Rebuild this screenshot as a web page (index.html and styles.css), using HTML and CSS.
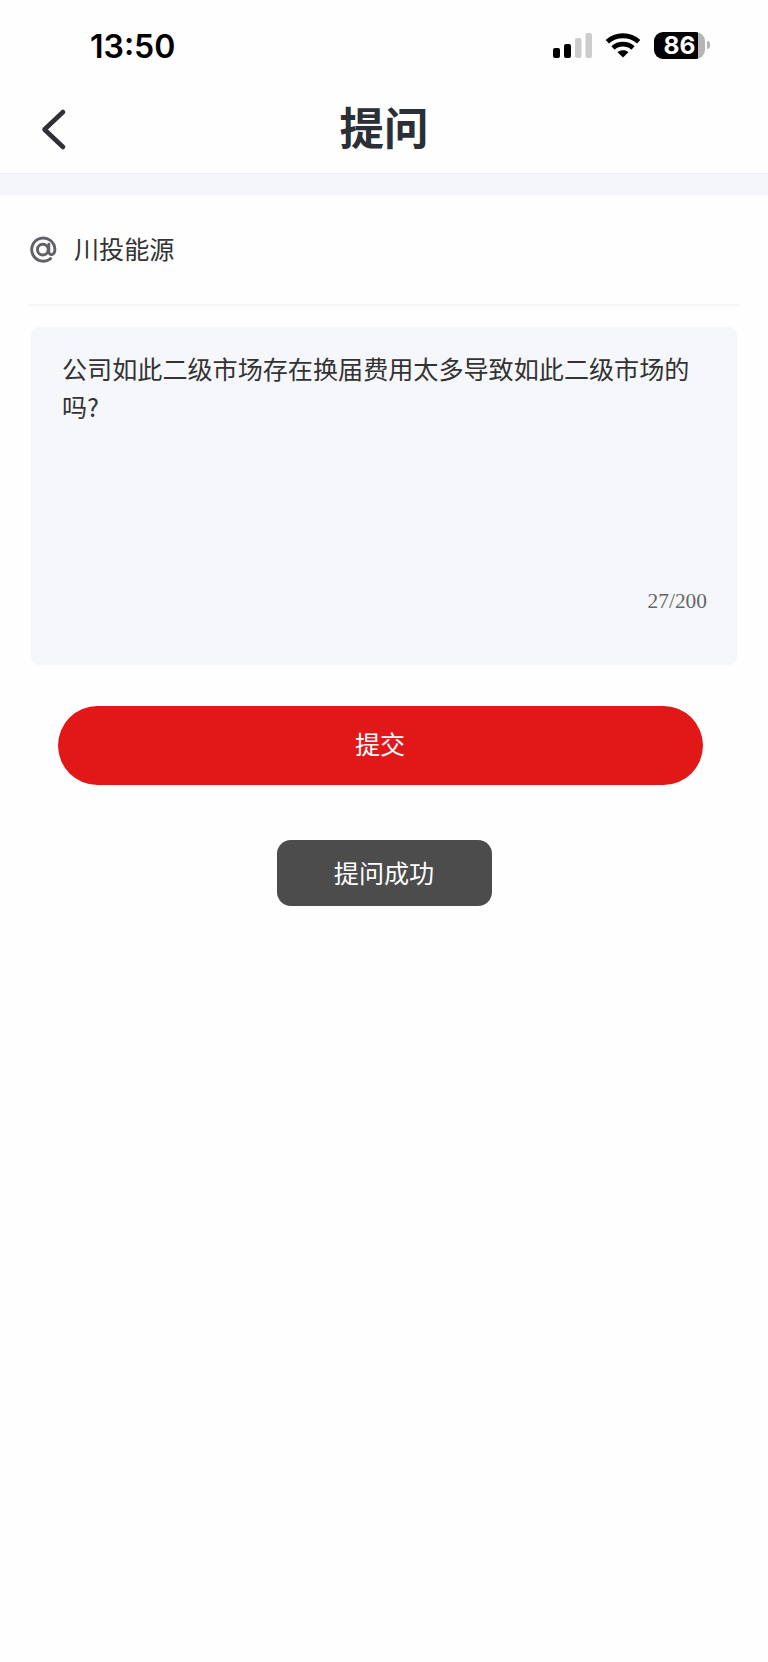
FILE: index.html
```html
<!DOCTYPE html>
<html lang="zh-CN">
<head>
<meta charset="utf-8">
<title>提问</title>
<link rel="stylesheet" href="styles.css">
</head>
<body>
<div class="status">
  <span class="time">13:50</span>
  <div class="status-icons">
    <svg class="signal" width="40" height="26" viewBox="0 0 40 26">
      <rect x="0" y="15" width="7" height="10" rx="2"/>
      <rect x="11" y="11" width="7" height="14" rx="2"/>
      <rect class="off" x="22" y="5" width="6.5" height="20" rx="2"/>
      <rect class="off" x="32.5" y="0" width="6.5" height="25" rx="2"/>
    </svg>
    <svg class="wifi" width="36" height="27" viewBox="0 0 36 27">
      <g fill="none" stroke="#000" stroke-width="4.8">
        <path d="M2.3 9.8C11 1.7 25 1.7 33.7 9.8"/>
        <path d="M8 16C13.6 10.9 22.4 10.9 28 16"/>
      </g>
      <path d="M12.6 20.2C15.6 17.6 20.4 17.6 23.4 20.2L18 25.6Z"/>
    </svg>
    <div class="battery"><span>86</span></div>
    <i class="nub"></i>
  </div>
</div>
<header class="header">
  <svg class="back" width="32" height="44" viewBox="0 0 32 44">
    <path d="M24 4L5.5 21.5L24 39"/>
  </svg>
  <h1 class="title">提问</h1>
</header>
<div class="band"></div>
<main class="main">
  <div class="company">
    <svg class="at" width="27" height="27" viewBox="0 0 27 27">
      <circle cx="12.8" cy="13.6" r="5.4"/>
      <path d="M18.8 8.2V15.6C18.8 20 24.9 19.8 24.9 13.2A11.6 11.6 0 1 0 20.6 22.6"/>
    </svg>
    <span class="name">川投能源</span>
  </div>
  <section class="question">
    <p class="text">公司如此二级市场存在换届费用太多导致如此二级市场的吗?</p>
    <span class="count">27/200</span>
  </section>
  <button class="submit">提交</button>
  <div class="toast">提问成功</div>
</main>
</body>
</html>
```
FILE: styles.css
```css
* { box-sizing: border-box; }
body {
  margin: 0;
  min-height: 1662px;
  background: #fefefe;
  color: #333;
  font: 25.1px "Noto Sans CJK SC", sans-serif;
}
.status {
  display: flex;
  justify-content: space-between;
  height: 86px;
  padding: 0 58px 0 90px;
}
.time {
  margin-top: 27px;
  color: #000;
  font: 600 32px/39px Inter, sans-serif;
}
.status-icons { display: flex; align-items: flex-start; }
.signal { margin-top: 33px; }
.signal .off { fill: #ccc; }
.wifi { margin: 32px 0 0 12px; }
.battery {
  width: 51px;
  height: 27px;
  margin: 32px 0 0 13px;
  border-radius: 9px;
  background: linear-gradient(90deg, #000 44px, #b5b5b5 44px);
  color: #fff;
  font: 700 24.5px/27px Inter, sans-serif;
  text-align: center;
}
.nub {
  width: 3px;
  height: 8px;
  margin: 41px 0 0 2px;
  border-radius: 0 3px 3px 0;
  background: #b5b5b5;
}
.header {
  display: grid;
  grid-template-columns: 96px 1fr 96px;
  align-items: center;
  height: 88px;
  border-bottom: 1px solid #eeeef3;
}
.back {
  margin-left: 39px;
  fill: none;
  stroke: #2f3137;
  stroke-width: 4.6;
  stroke-linecap: round;
  stroke-linejoin: round;
}
.title {
  margin: 0;
  padding-bottom: 7px;
  color: #2b2f36;
  font-size: 44.5px;
  font-weight: 700;
  line-height: 64px;
  text-align: center;
}
.band { height: 21px; background: #f5f6fa; }
.main { padding: 0 29px; }
.company {
  display: flex;
  align-items: center;
  gap: 17px;
  height: 111px;
  padding-left: 1px;
  border-bottom: 2px solid #f5f5f6;
}
.at { fill: none; stroke: #606166; stroke-width: 2.9; stroke-linecap: round; }
.name { padding-bottom: 3px; }
.question {
  display: flex;
  flex-direction: column;
  justify-content: space-between;
  height: 338px;
  margin: 21px 2px 0;
  padding: 23px 30px 51px 31px;
  border-radius: 8px;
  background: #f6f7fb;
}
.text { margin: 0; line-height: 37.5px; }
.count {
  align-self: flex-end;
  color: #666;
  font: 21.4px/26px "Liberation Serif", serif;
}
.submit {
  display: block;
  width: 645px;
  height: 79px;
  margin: 41px 0 0 28.5px;
  padding: 0 0 5px;
  border: 0;
  border-radius: 40px;
  background: #e21818;
  color: #fff;
  font: inherit;
}
.toast {
  width: 215px;
  height: 66px;
  margin: 55px auto 0;
  border-radius: 14px;
  background: #4c4c4c;
  color: #fff;
  line-height: 64px;
  text-align: center;
}
```
